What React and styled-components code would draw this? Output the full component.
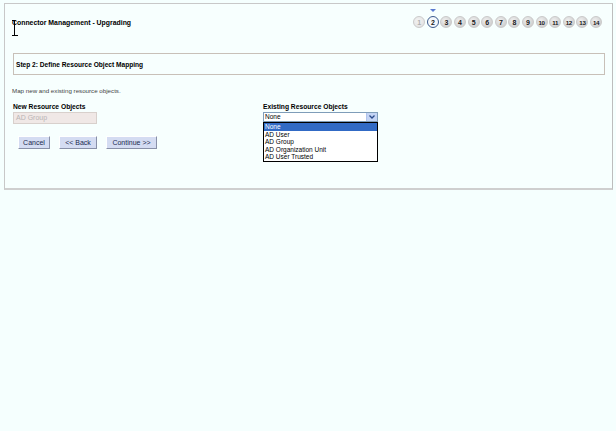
import styled, { createGlobalStyle } from "styled-components"

const GlobalStyle = createGlobalStyle`
    html, body {
        margin: 0;
        padding: 0;
        background: #f5fffe;
        font-family: "Liberation Sans", Arial, sans-serif;
    }
`

const Page = styled.div`
    width: 616px;
    height: 431px;
    padding: 3px 3px 0 4px;
    box-sizing: border-box;
`

const Panel = styled.section`
    position: relative;
    height: 187px;
    box-sizing: border-box;
    border: 1px solid #c8c8c8;
    border-right-color: #bdbdbd;
    border-bottom: 2px solid #cfcfcf;
    background: #f7fffe;
    display: flex;
    flex-direction: column;
`

const Header = styled.header`
    display: flex;
    justify-content: space-between;
    align-items: center;
    margin-top: 12px;
    padding: 0 10px 0 7px;
    height: 12px;
`

const Title = styled.h1`
    margin: 0;
    font-size: 6.9px;
    font-weight: 700;
    color: #000;
`

const Steps = styled.ol`
    display: flex;
    gap: 1.6px;
    margin: 0;
    padding: 0;
    list-style: none;
`

const Step = styled.li`
    position: relative;
    width: 12px;
    height: 12px;
    border-radius: 50%;
    box-sizing: border-box;
    display: flex;
    align-items: center;
    justify-content: center;
    font-size: ${p => (p.$wide ? "6.2px" : "7px")};
    font-weight: 700;
    letter-spacing: ${p => (p.$wide ? "-0.4px" : "0")};
    color: ${p => (p.$done ? "#b0b0b0" : "#1a1a1a")};
    background: ${p =>
        p.$current
            ? "#f4f8fc"
            : p.$done
            ? "radial-gradient(circle at 40% 35%, #f2f2f2, #e0e0e0)"
            : "radial-gradient(circle at 40% 35%, #f0f0f0, #c4c4c4)"};
    border: ${p => (p.$current ? "1.5px solid #3b5a8c" : "1px solid #cacaca")};
`

const Marker = styled.span`
    position: absolute;
    top: -8px;
    left: 50%;
    transform: translateX(-50%);
    width: 0;
    height: 0;
    border-left: 3px solid transparent;
    border-right: 3px solid transparent;
    border-top: 3px solid #5a7ad0;
`

const StepBox = styled.div`
    margin: 25px 7px 0 8px;
    height: 22px;
    box-sizing: border-box;
    border: 1px solid #c8c0b8;
    display: flex;
    align-items: center;
    padding-left: 2px;
    font-size: 6.6px;
    font-weight: 700;
    color: #000;
`

const Hint = styled.p`
    margin: 12px 0 0 7px;
    font-size: 6.2px;
    color: #444;
`

const Columns = styled.div`
    display: grid;
    grid-template-columns: 250px 1fr;
    margin: 9px 0 0 8px;
`

const Column = styled.div`
    display: flex;
    flex-direction: column;
`

const Label = styled.label`
    font-size: 6.7px;
    font-weight: 700;
    color: #000;
    line-height: 8px;
    height: 8px;
`

const DisabledInput = styled.div`
    margin-top: 1px;
    width: 84px;
    height: 12px;
    box-sizing: border-box;
    border: 1px solid #d8d0cc;
    background: #f0e8e6;
    color: #b8b4b4;
    font-size: 7px;
    line-height: 10px;
    padding-left: 2px;
`

const Buttons = styled.div`
    display: flex;
    gap: 9px;
    margin: 12px 0 0 5px;
`

const Button = styled.button`
    width: ${p => p.$w}px;
    height: 13px;
    padding: 0;
    box-sizing: border-box;
    font-family: inherit;
    font-size: 7px;
    color: #1a2a50;
    background: #d4dcf2;
    border: 1px solid;
    border-color: #ffffff #8890a8 #8890a8 #ffffff;
    cursor: pointer;
`

const Select = styled.div`
    margin-top: 1px;
    width: 115px;
    height: 10px;
    box-sizing: border-box;
    border: 1px solid #7f9db9;
    background: #fff;
    display: flex;
    align-items: stretch;
    font-size: 6.5px;
`

const SelectValue = styled.span`
    flex: 1;
    line-height: 8px;
    padding-left: 1px;
`

const SelectArrow = styled.span`
    width: 10px;
    background: #c4d4f4;
    border-left: 1px solid #b0c4ec;
    display: flex;
    align-items: center;
    justify-content: center;
`

const Options = styled.ul`
    margin: 0;
    padding: 0;
    list-style: none;
    width: 115px;
    box-sizing: border-box;
    border: 1px solid #000;
    background: #fff;
`

const Option = styled.li`
    height: 7.6px;
    line-height: 7.6px;
    font-size: 6.5px;
    padding-left: 1px;
    color: ${p => (p.$active ? "#fff" : "#000")};
    background: ${p => (p.$active ? "#316ac5" : "#fff")};
`

const Caret = styled.svg`
    position: absolute;
    left: 6px;
    top: 15px;
`

const steps = Array.from({ length: 14 }, (_, i) => i + 1)
const options = ["None", "AD User", "AD Group", "AD Organization Unit", "AD User Trusted"]

export default function App() {
    return (
        <Page>
            <GlobalStyle />
            <Panel>
                <Caret width="8" height="18" viewBox="0 0 8 18">
                    <path d="M1 1.5h2.5M3.5 1.5v15M1 16.5h6M3.5 1.5h1" stroke="#000" strokeWidth="1" fill="none" />
                </Caret>
                <Header>
                    <Title>Connector Management - Upgrading</Title>
                    <Steps>
                        {steps.map(n => (
                            <Step key={n} $done={n === 1} $current={n === 2} $wide={n >= 10}>
                                {n === 2 && <Marker />}
                                {n}
                            </Step>
                        ))}
                    </Steps>
                </Header>
                <StepBox>Step 2: Define Resource Object Mapping</StepBox>
                <Hint>Map new and existing resource objects.</Hint>
                <Columns>
                    <Column>
                        <Label>New Resource Objects</Label>
                        <DisabledInput>AD Group</DisabledInput>
                        <Buttons>
                            <Button $w={32}>Cancel</Button>
                            <Button $w={38}>&lt;&lt; Back</Button>
                            <Button $w={51}>Continue &gt;&gt;</Button>
                        </Buttons>
                    </Column>
                    <Column>
                        <Label>Existing Resource Objects</Label>
                        <Select>
                            <SelectValue>None</SelectValue>
                            <SelectArrow>
                                <svg width="6" height="4" viewBox="0 0 6 4">
                                    <path d="M0.5 0.5L3 3L5.5 0.5" stroke="#2a4a8a" strokeWidth="1.3" fill="none" />
                                </svg>
                            </SelectArrow>
                        </Select>
                        <Options>
                            {options.map((o, i) => (
                                <Option key={o} $active={i === 0}>{o}</Option>
                            ))}
                        </Options>
                    </Column>
                </Columns>
            </Panel>
        </Page>
    )
}
